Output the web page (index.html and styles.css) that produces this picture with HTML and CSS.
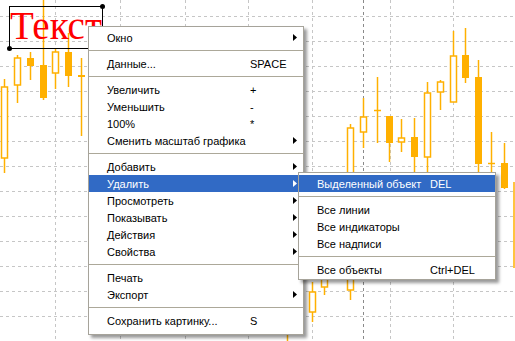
FILE: index.html
```html
<!DOCTYPE html>
<html lang="ru">
<head>
  <meta charset="UTF-8">
  <title>Chart context menu</title>
  <link rel="stylesheet" href="styles.css">
</head>
<body>
  <div class="chart">
    <svg id="chartSvg" class="chart-svg" width="515" height="341" viewBox="0 0 515 341">
      <g id="grid"></g>
      <g id="candles"></g>
      <!-- Text object -->
      <g class="text-object">
        <text x="10" y="39" class="label-text">Текст</text>
        <rect x="9.5" y="6.5" width="93" height="42" class="select-box"></rect>
        <circle cx="102.5" cy="6.5" r="2.5"></circle>
        <circle cx="9.5" cy="48.5" r="2.5"></circle>
      </g>
    </svg>

    <!-- Main context menu -->
    <div class="menu main-menu">
      <div class="item"><span class="label">Окно</span><span class="arrow"></span></div>
      <div class="sep"></div>
      <div class="item"><span class="label">Данные...</span><span class="key">SPACE</span></div>
      <div class="sep"></div>
      <div class="item"><span class="label">Увеличить</span><span class="key">+</span></div>
      <div class="item"><span class="label">Уменьшить</span><span class="key">-</span></div>
      <div class="item"><span class="label">100%</span><span class="key">*</span></div>
      <div class="item"><span class="label">Сменить масштаб графика</span><span class="arrow"></span></div>
      <div class="sep"></div>
      <div class="item"><span class="label">Добавить</span><span class="arrow"></span></div>
      <div class="item active"><span class="label">Удалить</span><span class="arrow"></span></div>
      <div class="item"><span class="label">Просмотреть</span><span class="arrow"></span></div>
      <div class="item"><span class="label">Показывать</span><span class="arrow"></span></div>
      <div class="item"><span class="label">Действия</span><span class="arrow"></span></div>
      <div class="item"><span class="label">Свойства</span><span class="arrow"></span></div>
      <div class="sep"></div>
      <div class="item"><span class="label">Печать</span></div>
      <div class="item"><span class="label">Экспорт</span><span class="arrow"></span></div>
      <div class="sep"></div>
      <div class="item"><span class="label">Сохранить картинку...</span><span class="key">S</span></div>
    </div>

    <!-- Delete submenu -->
    <div class="menu sub-menu">
      <div class="item active"><span class="label">Выделенный объект</span><span class="key">DEL</span></div>
      <div class="sep"></div>
      <div class="item"><span class="label">Все линии</span></div>
      <div class="item"><span class="label">Все индикаторы</span></div>
      <div class="item"><span class="label">Все надписи</span></div>
      <div class="sep"></div>
      <div class="item"><span class="label">Все объекты</span><span class="key">Ctrl+DEL</span></div>
    </div>
  </div>

  <script>
    const NS = 'http://www.w3.org/2000/svg';

    function el(tag, attrs, parent) {
      const node = document.createElementNS(NS, tag);
      for (const k in attrs) node.setAttribute(k, attrs[k]);
      parent.appendChild(node);
      return node;
    }

    // Grid
    const grid = document.getElementById('grid');
    for (let y = 16.5; y < 341; y += 25) {
      el('line', { x1: 0, y1: y, x2: 515, y2: y, class: 'grid-line' }, grid);
    }
    [55.5, 120.5, 185.5, 248.5, 312.5, 390.5, 453.5].forEach(x => {
      el('line', { x1: x, y1: 0, x2: x, y2: 341, class: 'grid-line' }, grid);
    });
    el('line', { x1: 363.5, y1: 0, x2: 363.5, y2: 341, class: 'period-line' }, grid);

    // Candles: [centerX, high, low, bodyTop, bodyBottom, filled]
    // bodyTop null = body is off screen, only the wick shows
    const candles = [
      [4.5, 79, 173, 87, 158, false],
      [17.5, 55, 103, 58, 85, false],
      [30.5, 52, 80, 58, 66, true],
      [43.5, 0, 100, 65, 98, true],
      [55.5, 48, 89, 52, 73, false],
      [68.5, 33, 87, 52, 76, true],
      [81.5, 58, 136, 75, 77, true],
      [287.5, 300, 341, 318, 330, false],
      [312.5, 282, 322, 292, 312, false],
      [324.5, 250, 295, 262, 287, false],
      [350.5, 124, 300, 128, 290, false],
      [363.5, 98, 148, 117, 132, false],
      [377.5, 77, 143, 110, 110, true],
      [389.5, 116, 162, 116, 143, true],
      [401.5, 119, 152, 138, 142, false],
      [414.5, 118, 200, 137, 157, true],
      [427.5, 82, 200, 93, 157, false],
      [440.5, 80, 110, 82, 92, false],
      [453.5, 31, 102, 56, 102, false],
      [465.5, 28, 83, 55, 78, true],
      [478.5, 60, 172, 77, 164, true],
      [491.5, 132, 172, 163, 163, true],
      [504.5, 143, 189, 163, 188, true],
      [514, 182, 268, null, null, true]
    ];
    const group = document.getElementById('candles');
    candles.forEach(([x, hi, lo, top, bottom, filled]) => {
      el('line', { x1: x, y1: hi, x2: x, y2: lo, class: 'wick' }, group);
      if (top === null) return;
      if (bottom - top < 1) {
        el('line', { x1: x - 3.5, y1: top + 0.5, x2: x + 3.5, y2: top + 0.5, class: 'wick' }, group);
      } else if (filled) {
        el('rect', { x: x - 3.5, y: top, width: 7, height: bottom - top, class: 'body-fill' }, group);
      } else {
        el('rect', { x: x - 3, y: top, width: 6, height: bottom - top, class: 'body-hollow' }, group);
      }
    });
  </script>
</body>
</html>
```

FILE: styles.css
```css
/* General */
body {
  margin: 0;
  background: #fff;
  font-family: "Liberation Sans", Arial, sans-serif;
  font-size: 11px;
  overflow: hidden;
}
.chart {
  position: relative;
  width: 515px;
  height: 341px;
}
.chart-svg {
  display: block;
}

/* Chart */
.grid-line {
  stroke: #c6c6c6;
  stroke-width: 1;
  stroke-dasharray: 3 3;
}
.period-line {
  stroke: #8a8a8a;
  stroke-width: 1;
  stroke-dasharray: 3 3;
}
.wick {
  stroke: #ffb000;
  stroke-width: 1.5;
}
.body-fill {
  fill: #ffb000;
}
.body-hollow {
  fill: #fff;
  stroke: #ffb000;
  stroke-width: 1.5;
}
.label-text {
  font-family: "Liberation Serif", "Times New Roman", serif;
  font-size: 39px;
  fill: #ff0000;
}
.select-box {
  fill: none;
  stroke: #000;
  stroke-width: 1;
}
.text-object circle {
  fill: #000;
}

/* Menus */
.menu {
  position: absolute;
  background: #fff;
  border: 1px solid #a6a39a;
  box-shadow: 3px 3px 3px rgba(0, 0, 0, 0.4);
}
.main-menu {
  left: 88px;
  top: 26px;
  width: 214px;
  padding: 2px 0 5px;
}
.sub-menu {
  left: 298px;
  top: 172px;
  width: 196px;
  padding: 2px 0 1px;
}
.item {
  display: flex;
  align-items: center;
  height: 17px;
  padding-left: 18px;
  color: #000;
  white-space: nowrap;
}
.item.active {
  background: #316ac5;
  color: #fff;
}
.main-menu .label {
  width: 143px;
}
.sub-menu .label {
  width: 113px;
}
.arrow {
  width: 4px;
  height: 7px;
  margin-left: auto;
  margin-right: 6px;
  background: currentColor;
  clip-path: polygon(0 0, 100% 50%, 0 100%);
}
.sep {
  height: 9px;
  display: flex;
  align-items: center;
}
.sep::before {
  content: "";
  flex: 1;
  height: 1px;
  background: #aca899;
}
```
